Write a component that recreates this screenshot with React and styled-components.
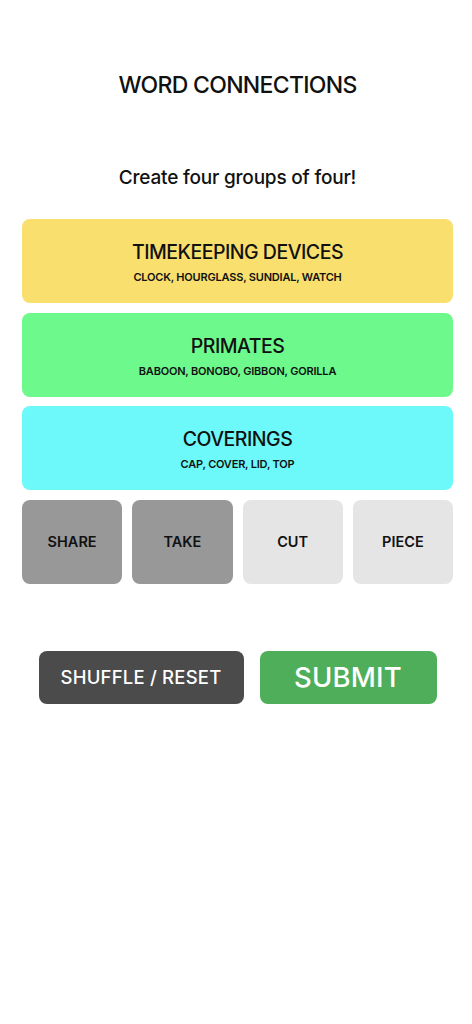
import React from "react";
import styled, { createGlobalStyle } from "styled-components";

const Global = createGlobalStyle`
  *, *::before, *::after { box-sizing: border-box; }
  html, body { margin: 0; padding: 0; background: #ffffff; }
  body { font-family: Inter, "Open Sans", sans-serif; color: #111; }
`;

const Page = styled.main`
  display: flex;
  flex-direction: column;
  padding: 70px 19px 0 22px;
`;

const Title = styled.h1`
  margin: 0;
  height: 30px;
  line-height: 30px;
  font-size: 23px;
  font-weight: 500;
  text-align: center;
  letter-spacing: -0.7px;
`;

const Subtitle = styled.p`
  margin: 63px 0 26px;
  height: 30px;
  line-height: 30px;
  font-size: 19px;
  font-weight: 500;
  text-align: center;
  letter-spacing: -0.2px;
`;

const Board = styled.section`
  display: flex;
  flex-direction: column;
  gap: 9.5px;
`;

const Group = styled.div`
  height: 84px;
  border-radius: 8px;
  background: ${(p) => p.$color};
  display: flex;
  flex-direction: column;
  align-items: center;
  justify-content: center;
  gap: 5px;
  padding-top: 3px;
`;

const GroupName = styled.div`
  font-size: 19.5px;
  line-height: 24px;
  font-weight: 500;
  letter-spacing: -0.5px;
`;

const GroupWords = styled.div`
  font-size: 11px;
  line-height: 16px;
  font-weight: 600;
  letter-spacing: -0.2px;
`;

const TileRow = styled.div`
  display: grid;
  grid-template-columns: repeat(4, 1fr);
  gap: 10px;
`;

const Tile = styled.button`
  height: 84px;
  border: none;
  border-radius: 8px;
  background: ${(p) => (p.$selected ? "#989898" : "#e5e5e5")};
  font-family: inherit;
  font-size: 14.5px;
  font-weight: 600;
  color: #111;
  padding: 0;
`;

const Actions = styled.div`
  display: flex;
  justify-content: center;
  gap: 16px;
  margin-top: 67px;
`;

const Button = styled.button`
  height: 53px;
  width: ${(p) => p.$w}px;
  border: none;
  border-radius: 8px;
  background: ${(p) => p.$bg};
  color: #fff;
  font-family: inherit;
  font-size: ${(p) => p.$fs}px;
  font-weight: ${(p) => p.$fw};
  letter-spacing: 0.2px;
  padding: 0;
`;

const groups = [
  { name: "TIMEKEEPING DEVICES", words: "CLOCK, HOURGLASS, SUNDIAL, WATCH", color: "#f9df6d" },
  { name: "PRIMATES", words: "BABOON, BONOBO, GIBBON, GORILLA", color: "#6df98b" },
  { name: "COVERINGS", words: "CAP, COVER, LID, TOP", color: "#6df9f9" },
];

const tiles = [
  { w: "SHARE", s: true },
  { w: "TAKE", s: true },
  { w: "CUT", s: false },
  { w: "PIECE", s: false },
];

export default function App() {
  return (
    <>
      <Global />
      <Page>
        <Title>WORD CONNECTIONS</Title>
        <Subtitle>Create four groups of four!</Subtitle>
        <Board>
          {groups.map((g) => (
            <Group key={g.name} $color={g.color}>
              <GroupName>{g.name}</GroupName>
              <GroupWords>{g.words}</GroupWords>
            </Group>
          ))}
          <TileRow>
            {tiles.map((t) => (
              <Tile key={t.w} $selected={t.s}>{t.w}</Tile>
            ))}
          </TileRow>
        </Board>
        <Actions>
          <Button $w={205} $bg="#4b4b4b" $fs={18.5} $fw={500}>SHUFFLE / RESET</Button>
          <Button $w={177} $bg="#4fae5a" $fs={27.5} $fw={500}>SUBMIT</Button>
        </Actions>
      </Page>
    </>
  );
}
